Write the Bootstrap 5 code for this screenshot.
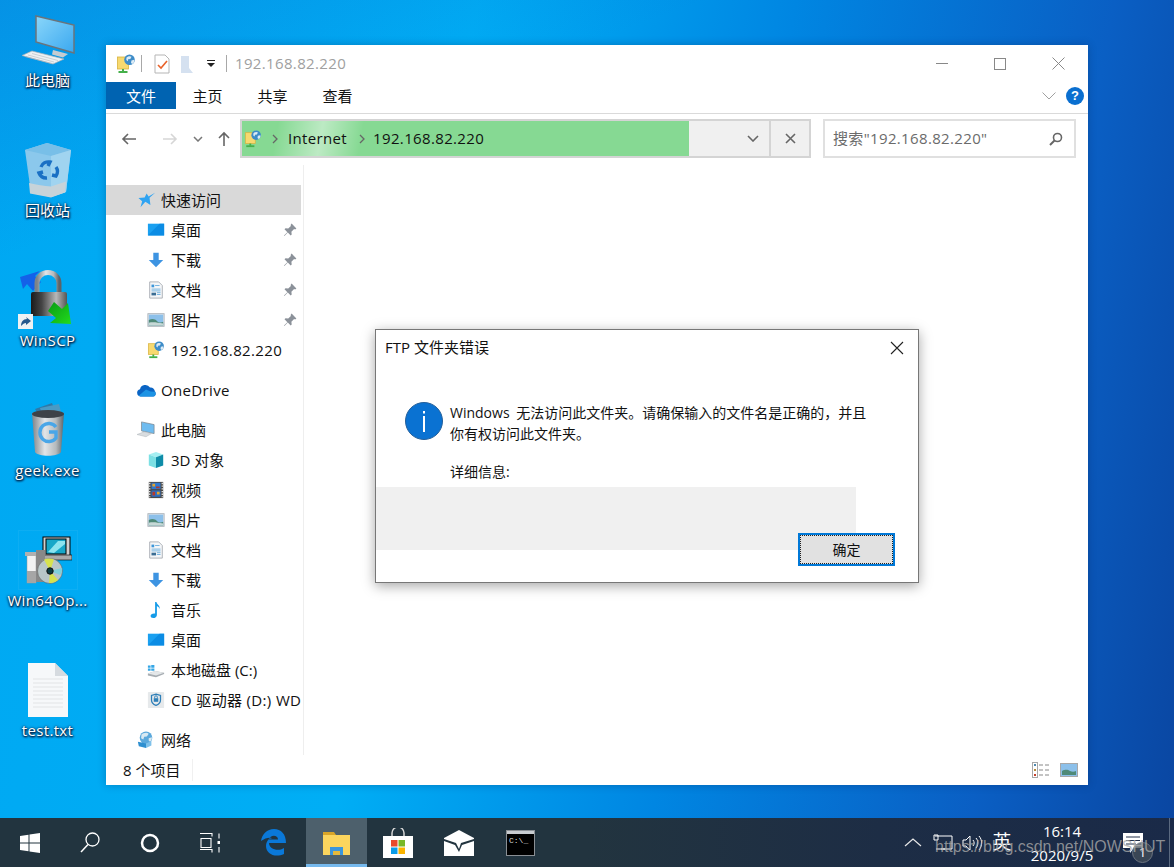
<!DOCTYPE html>
<html lang="zh-CN">
<head>
    <meta charset="UTF-8">
    <meta name="viewport" content="width=device-width, initial-scale=1">
    <title>FTP 文件夹错误</title>
    <link href="https://cdn.jsdelivr.net/npm/bootstrap@5.3.0/dist/css/bootstrap.min.css" rel="stylesheet">
    <style>
        html, body { height: 100%; margin: 0; overflow: hidden; }
        body {
          font-family: "Open Sans", "Noto Sans CJK SC", sans-serif;
          font-size: 15px;
          color: #111;
          background: #00a8f0;
        }
        .svg-defs { position: absolute; width: 0; height: 0; }
        svg { display: block; flex: none; }
        .lat { letter-spacing: .35px; }

        .desk {
          width: 1174px;
          height: 867px;
          position: relative;
          background:
            linear-gradient(160deg, rgba(16,96,200,.3) 0, rgba(16,96,200,0) 20%),
            linear-gradient(100deg, #00a8f2 0, #00aef5 36%, #0086e2 60%, #0a5fc4 84%, #0a45a0 100%);
        }
        .desk-main { height: 818px; }
        .desk-col { width: 95px; padding-top: 10px; }
        .desk-item { height: 130px; }
        .desk-pic { height: 60px; }
        .desk-frame { width: 60px; height: 60px; border: 1px solid rgba(255,255,255,.05); }
        .desk-label {
          height: 20px;
          line-height: 20px;
          color: #fff;
          text-shadow: 0 1px 2px #00264d, 1px 1px 2px #00264d, 0 0 3px #00264d;
          white-space: nowrap;
        }

        .win-frame {
          position: absolute;
          left: 106px;
          top: 45px;
          width: 982px;
          height: 740px;
          background: #fff;
          box-shadow: 0 0 8px rgba(0,30,80,.3);
        }
        .title-row { height: 37px; padding-left: 10px; }
        .title-sep { width: 1px; height: 17px; background: #a8a8a8; }
        .title-sep-a { margin-left: 5px; }
        .title-check { margin-left: 11px; }
        .title-blank { margin-left: 8px; }
        .title-drop { margin-left: 11px; }
        .title-sep-b { margin-left: 10px; }
        .title-text { color: #a0a0a0; margin-left: 8px; }
        .win-ctl { width: 58.5px; height: 37px; }
        .tab-row { height: 32px; padding-bottom: 4px; border-bottom: 1px solid #dadada; }
        .tab-file { width: 70px; background: #0063b1; color: #fff; padding-top: 2px; }
        .tab-item { width: 65px; padding: 2px 2px 0 0; }
        .tab-right { padding-right: 4px; gap: 10px; }
        .help-dot {
          width: 18px; height: 18px; border-radius: 50%;
          background: #0a6fd0; color: #fff;
          font: bold 13px/18px "Liberation Sans", sans-serif;
          text-align: center;
        }

        .nav-row { height: 51px; padding-top: 5px; padding-left: 15px; }
        .nav-btns { width: 119px; }
        .nav-btn { height: 39px; }
        .nav-fwd { margin-left: 25px; }
        .nav-more { margin-left: 15px; }
        .addr-box {
          width: 571px;
          height: 39px;
          border: 2px solid #d4d4d4;
          background: #f0f0f0;
        }
        .addr-fill {
          width: 447px;
          flex: none;
          background:
            linear-gradient(100deg, rgba(255,255,255,0) 8%, rgba(255,255,255,.45) 18%, rgba(255,255,255,0) 27%),
            #86d993;
          padding-left: 2px;
        }
        .addr-sep-a { margin-left: 10px; }
        .addr-seg-a { margin-left: 10px; }
        .addr-sep-b { margin-left: 12px; }
        .addr-seg-b { margin-left: 8px; }
        .addr-drop { width: 80px; flex: none; padding-right: 10px; }
        .addr-end { width: 40px; flex: none; border-left: 2px solid #d4d4d4; }
        .search-box {
          width: 253px;
          height: 39px;
          margin-left: 12px;
          border: 2px solid #e0e0e0;
          padding: 0 11px 0 8px;
          color: #6b6b6b;
        }

        .body-row { height: 590px; }
        .side-pane { width: 198px; padding-top: 20px; border-right: 1px solid #eee; overflow: hidden; }
        .side-list { width: 195px; }
        .side-list .side-item {
          height: 30px;
          white-space: nowrap;
          border: 0;
          background: none;
          border-radius: 0;
          color: #111;
          padding: 0 0 0 41px;
          gap: 6px;
        }
        .side-item span { padding-top: 1px; }
        .side-list .side-top { padding-left: 30px; gap: 5px; margin-top: 10px; }
        .side-list .side-sel { background: #d9d9d9; padding-left: 32px; gap: 5px; }
        .side-pin { margin-left: auto; margin-right: 4px; }

        .status-row { height: 30px; padding: 0 10px 0 17px; }
        .status-count { width: 70px; border-right: 1px solid #f0f0f0; }
        .status-views { gap: 10px; }

        .dlg-frame {
          position: absolute;
          left: 375px;
          top: 329px;
          width: 544px;
          height: 254px;
          background: #fff;
          border: 1px solid #777;
          box-shadow: 0 3px 12px rgba(0,0,0,.35);
        }
        .dlg-head { height: 34px; padding: 0 14px 0 9px; }
        .dlg-close { margin-top: 2px; }
        .dlg-body { padding: 38px 0 0 29px; gap: 7px; font-size: 14px; }
        .dlg-msg { width: 420px; line-height: 21px; word-spacing: 3px; }
        .dlg-detail { margin: 17px 0 0 74px; height: 21px; line-height: 21px; font-size: 14px; }
        .dlg-band { width: 480px; height: 63px; background: #f0f0f0; margin-top: 5px; }
        .dlg-ok {
          position: absolute;
          left: 422px;
          top: 203px;
          width: 97px;
          height: 33px;
          background: #e1e1e1;
          border: 2px solid #0078d7;
          outline: 1px dotted #222;
          outline-offset: -3px;
          border-radius: 0;
          padding: 0;
          font-size: 14px;
          color: #111;
        }

        .task-bar {
          height: 49px;
          background: linear-gradient(90deg, #22343f 0, #22343f 50%, #1d2d45 75%, #1a2a48 100%);
          color: #fff;
        }
        .task-btn { width: 61.2px; height: 49px; }
        .task-sm { width: 60px; }
        .task-edge { width: 66px; }
        .task-on { background: #4d606c; border-bottom: 3px solid #76b9ed; padding-top: 3px; }
        .tray-cell { width: 30px; }
        .tray-first { margin-left: auto; }
        .tray-ime { width: 28px; font-size: 19px; }
        .tray-clock { width: 92px; line-height: 24px; }
        .tray-note { width: 62px; position: relative; border-right: 1px solid #5b6a80; margin-right: 4px; padding-left: 15px; }
        .note-count {
          position: absolute;
          left: 24px; top: 24px;
          width: 21px; height: 21px;
          border-radius: 50%;
          background: rgba(70,80,90,.75);
          border: 1px solid #6c7480;
          font-size: 13px;
          line-height: 19px;
          text-align: center;
        }
        .mark-text {
          position: absolute;
          left: 935px;
          top: 837px;
          font-family: "Liberation Sans", sans-serif;
          font-size: 16px;
          line-height: 20px;
          color: rgba(170,170,170,.78);
          white-space: nowrap;
        }
    </style>
</head>
<body>

<svg class="svg-defs" aria-hidden="true">
    <defs>
        <linearGradient id="gScreen" x1="0" y1="0" x2="1" y2="1"><stop offset="0" stop-color="#8ad6fa"/><stop offset="1" stop-color="#3aa8f0"/></linearGradient>
        <linearGradient id="gMetal" x1="0" y1="0" x2="1" y2="0"><stop offset="0" stop-color="#7d8388"/><stop offset=".4" stop-color="#e2e5e8"/><stop offset=".75" stop-color="#b5babd"/><stop offset="1" stop-color="#5d6368"/></linearGradient>
        <linearGradient id="gLock" x1="0" y1="0" x2="1" y2="0"><stop offset="0" stop-color="#1a1a1a"/><stop offset=".3" stop-color="#444"/><stop offset=".7" stop-color="#b8b8b8"/><stop offset="1" stop-color="#555"/></linearGradient>
        <linearGradient id="gGreen" x1="0" y1="0" x2="1" y2="1"><stop offset="0" stop-color="#0a9a12"/><stop offset="1" stop-color="#22dc1e"/></linearGradient>

        <symbol id="i-net" viewBox="0 0 20 20">
            <rect x="1.5" y="3" width="11" height="12" fill="#f7d96f" stroke="#d8b23e" stroke-width=".8"/>
            <rect x="6" y="15" width="2" height="2.5" fill="#45b04a"/>
            <rect x="2.5" y="17" width="9" height="2" fill="#45b04a"/>
            <circle cx="13.5" cy="5.8" r="5.3" fill="#3d8cc8"/>
            <path d="M10.5 3.5c2-1.8 4-1.4 5-.8l-1.2 2.2-2.2.4-.2 2-1.6-1.2zM15.4 6.5l2.8-.8c.4 1.8-.4 3.4-1.8 4.2l-1.4-1z" fill="#dcebf5"/>
        </symbol>
        <symbol id="i-star" viewBox="0 0 20 20">
            <path d="M19 2 12.8 7.600 13.800 15.500 8.200 12 2.800 18 4.600 11.400 0.500 7.800 7.400 7.300 9.600 2.800 11.800 6.200z" fill="#2ea3f2"/>
        </symbol>
        <symbol id="i-screen" viewBox="0 0 20 20">
            <rect x="1" y="3" width="18" height="13" fill="#1aa0f0"/>
            <path d="M1 16 14 3h5v13z" fill="#0b8ce4"/>
        </symbol>
        <symbol id="i-down" viewBox="0 0 20 20">
            <path d="M7 2h6v8h5l-8 8-8-8h5z" fill="#3d94e2"/>
        </symbol>
        <symbol id="i-doc" viewBox="0 0 20 20">
            <path d="M3 1h10l4 4v14H3z" fill="#f4f6f8" stroke="#a8adb2"/>
            <path d="M5 4h3v3H5z" fill="#3c96d8"/>
            <path d="M9 5h5M5 9h10M5 11h10M11 13h4M11 15h4" stroke="#6aaede" stroke-width="1"/>
            <rect x="5" y="13" width="5" height="3" fill="#3a6d94"/>
        </symbol>
        <symbol id="i-pic" viewBox="0 0 20 20">
            <rect x="1" y="3" width="18" height="14" fill="#e8ecef" stroke="#a9b0b6"/>
            <rect x="2" y="4" width="16" height="12" fill="#8cc0ea"/>
            <path d="M2 10c4-2 7-1 9 1s5 2 7 1v4H2z" fill="#4f8a78"/>
            <path d="M2 13c5-1 10 0 16 1v2H2z" fill="#c6d8d6"/>
        </symbol>
        <symbol id="i-pin" viewBox="0 0 14 14">
            <path d="M8.600 .6 13.400 5.400l-1.300 1-1-.3-2.700 2.700.3 2.700-1 1L4.800 9.600 1.400 13l-.4-.4L4.400 9.200 1.500 6.300l1-1 2.700.3 2.700-2.700-.3-1z" fill="#8b9199"/>
        </symbol>
        <symbol id="i-cloud" viewBox="0 0 22 16">
            <path d="M5 14.500a4 4 0 0 1-.6-7.900 6 6 0 0 1 11-1.800 4.600 4.600 0 0 1 5.400 4.400c1.400 1 1.400 5.300-1.800 5.300z" fill="#0a64c4"/>
            <path d="M3 13.800 11 7l5 2 5 .5c1 2 .5 5-2 5H5c-1 0-1.500-.3-2-.7z" fill="#1c93e4"/>
        </symbol>
        <symbol id="i-pc" viewBox="0 0 22 20">
            <path d="M6 1l14 3v10L6 11z" fill="#6fbcf0" stroke="#7d8790" stroke-width=".8"/>
            <path d="M1 15l8-3 8 2-6 3.500z" fill="#d9dde0" stroke="#aab0b5" stroke-width=".5"/>
        </symbol>
        <symbol id="i-cube" viewBox="0 0 20 20">
            <path d="M10 1l8 3-8 3-8-3z" fill="#a5eff2"/>
            <path d="M10 7l8-3v12l-8 3z" fill="#0e8ca8"/>
            <path d="M2 4l8 3v12l-8-3z" fill="#7ce0e4"/>
        </symbol>
        <symbol id="i-film" viewBox="0 0 20 20">
            <rect x="2" y="1" width="16" height="18" fill="#4a4a4a"/>
            <path d="M3 2v16M17 2v16" stroke="#ddd" stroke-width="1.600" stroke-dasharray="1.500 1.500"/>
            <rect x="5" y="2" width="10" height="7" fill="#2f78d0"/>
            <rect x="5" y="10.500" width="10" height="7" fill="#2a6fc6"/>
            <path d="M6 3h3v3H6zM11 12h3v3h-3z" fill="#e8a52c"/>
            <path d="M10 6h4v2h-4zM6 12h3v4H6z" fill="#b43a2c"/>
        </symbol>
        <symbol id="i-note" viewBox="0 0 20 20">
            <path d="M9 1h1.500c.5 3 4.500 4 3.500 8-.6-2-2-3-3-3.400V15.500c0 2-2 3.500-4 3.500S4 18 4 16.500 6 13.500 9 14z" fill="#159be8"/>
        </symbol>
        <symbol id="i-drive" viewBox="0 0 20 20">
            <path d="M1 14l8-3 10 2v1.500L10 18l-9-2z" fill="#a7adb2"/>
            <path d="M1 14l8-3 10 2-9 3z" fill="#e4e7e9"/>
            <path d="M1 5h3v2.500H1zM4.700 4.500h3.500v3H4.700zM1 8.200h3v2.500H1zM4.700 8.200h3.500v2.500H4.700z" fill="#34a6e6"/>
        </symbol>
        <symbol id="i-cd" viewBox="0 0 20 20">
            <rect x="1" y="1" width="18" height="18" rx="1" fill="#e6e9eb"/>
            <path d="M10 3.500l5 1.500v5c0 3-2.500 5-5 6-2.500-1-5-3-5-6V5z" fill="none" stroke="#2e7fb8" stroke-width="1.400"/>
            <rect x="7.500" y="8" width="5" height="4" fill="#2e7fb8"/>
            <path d="M8.500 8V6.800a1.500 1.500 0 0 1 3 0V8" fill="none" stroke="#2e7fb8"/>
        </symbol>
        <symbol id="i-globe" viewBox="0 0 22 20">
            <circle cx="11" cy="7.500" r="7" fill="#5aa8dc"/>
            <path d="M6 4c2-2 6-3 8-1l-2 3-3 .5-1 3-2.500-1.500zM14 8l3.500-1c.3 2-.7 4-2 5l-1.500-1.500z" fill="#d8e9f2"/>
            <path d="M2 12l9 2v5l-8-2z" fill="#2e8fd0"/>
            <path d="M11 14l6-3v5l-6 3z" fill="#7fc1ea"/>
        </symbol>

        <symbol id="d-pc" viewBox="0 0 56 50">
            <path d="M16 1 54 10V38L16 27z" fill="url(#gScreen)" stroke="#6a747c" stroke-width="1.500"/>
            <path d="M33 35l15 4-5 3.500-11-3z" fill="#c6ccd1"/>
            <path d="M2 40.500 12 36 44 44 33 49z" fill="#eef1f3" stroke="#a8afb5" stroke-width=".7"/>
            <path d="M8 40l26 7M12 38.500l26 7M5 41.500l27 7" stroke="#b5bbc0" stroke-width=".6"/>
        </symbol>
        <symbol id="d-bin" viewBox="0 0 50 56">
            <path d="M2 8 24 1l24 7-5 42-15 5-20-4z" fill="#8bc8ec"/>
            <path d="M2 8 24 1l24 7-20 6z" fill="#78bfe8"/>
            <path d="M28 14l20-6-5 42-15 5z" fill="#a0d4f0"/>
            <path d="M6 41c8 2 15 3 22 3.500l15-5-1 11-14 5-21-4z" fill="#c7d3d9"/>
            <path d="M18 25a8 8 0 0 1 9-5l-2 4M33 25a8 8 0 0 1 0 9l-4-1M24 36a8 8 0 0 1-8-5l4-1" fill="none" stroke="#1a70c4" stroke-width="3.400"/>
        </symbol>
        <symbol id="d-scp" viewBox="0 0 60 60">
            <path d="M2 7 22 1l-5 5 6 6-8 9-6-7-4 5z" fill="#1461e8"/>
            <path d="M19 24V13a10.500 10 0 0 1 22 0v11" fill="none" stroke="url(#gMetal)" stroke-width="5"/>
            <rect x="13" y="22" width="36" height="24" rx="2" fill="url(#gLock)"/>
            <path d="M36 32l8 7 6-6 3 21-21-1 6-5-8-7z" fill="url(#gGreen)"/>
            <rect x="0" y="44" width="15" height="15" fill="#eef1f3"/>
            <path d="M3 56c0-4 2-7 6-7l-1-2 5 4-5 4v-2c-2 0-3 1-5 3z" fill="#26588c"/>
        </symbol>
        <symbol id="d-geek" viewBox="0 0 34 56">
            <path d="M4 7l17-6 3 8-17 3z" fill="#2f79a8"/>
            <path d="M9 6l19-4 2 8-19 2z" fill="#4a9ac4"/>
            <path d="M1 11c4-2 28-2 32 0l-3 39c-3 5-23 5-26 0z" fill="url(#gMetal)"/>
            <ellipse cx="17" cy="12" rx="16" ry="4" fill="#3d4248"/>
            <path d="M25 25a9 9 0 1 0 0 11v-6h-7" fill="none" stroke="#49a6e8" stroke-width="3.400"/>
        </symbol>
        <symbol id="d-setup" viewBox="0 0 48 48">
            <rect x="19" y="1" width="27" height="22" fill="#d0d0d0" stroke="#000"/>
            <rect x="22" y="3" width="20" height="15" fill="#17a7c8" stroke="#000"/>
            <path d="M24 16 34 5h7v3L30 17z" fill="#8ce4ef"/>
            <rect x="17" y="19" width="31" height="5" fill="#aaa" stroke="#000" stroke-width=".6"/>
            <rect x="3" y="19" width="9" height="28" fill="#f2f2f2" stroke="#999" stroke-width=".5"/>
            <rect x="3" y="35" width="9" height="12" fill="#a6a6a6"/>
            <rect x="1" y="16" width="13" height="4" fill="#b0b0b0"/>
            <rect x="12" y="14" width="9" height="32" fill="#888"/>
            <circle cx="26" cy="35" r="12.500" fill="#b8c6c8" stroke="#555" stroke-width=".5"/>
            <path d="M26 35 20 23.500c3-1.200 7-1.500 10 0zM26 35l8 9c-3 2.500-6 3-9 3z" fill="#d6e24f"/>
            <path d="M26 35l12-3c.3 3-.5 5-2 7z" fill="#7fd0dc"/>
            <circle cx="26" cy="35" r="3.200" fill="#0d3d44" stroke="#111"/>
        </symbol>
        <symbol id="d-txt" viewBox="0 0 42 54">
            <path d="M1 0h27l13 13v41H1z" fill="#f6f8fa"/>
            <path d="M28 0l13 13H28z" fill="#d6dbe0"/>
            <path d="M6 16h30M6 20h30M6 24h30M6 28h30M6 32h30M6 36h30M6 40h30M6 44h30" stroke="#e2e4e6" stroke-width="1"/>
        </symbol>
    </defs>
</svg>

<div class="desk d-flex flex-column">
    <!-- desktop icons -->
    <div class="desk-main">
        <div class="desk-col d-flex flex-column">
            <div class="desk-item d-flex flex-column align-items-center">
                <div class="desk-pic d-flex align-items-center justify-content-center"><svg width="56" height="50"><use href="#d-pc"/></svg></div>
                <div class="desk-label">此电脑</div>
            </div>
            <div class="desk-item d-flex flex-column align-items-center">
                <div class="desk-pic d-flex align-items-center justify-content-center"><svg width="50" height="56"><use href="#d-bin"/></svg></div>
                <div class="desk-label">回收站</div>
            </div>
            <div class="desk-item d-flex flex-column align-items-center">
                <div class="desk-pic d-flex align-items-center justify-content-center"><svg width="60" height="60"><use href="#d-scp"/></svg></div>
                <div class="desk-label lat">WinSCP</div>
            </div>
            <div class="desk-item d-flex flex-column align-items-center">
                <div class="desk-pic d-flex align-items-center justify-content-center"><svg width="34" height="56"><use href="#d-geek"/></svg></div>
                <div class="desk-label lat">geek.exe</div>
            </div>
            <div class="desk-item d-flex flex-column align-items-center">
                <div class="desk-pic d-flex align-items-center justify-content-center"><div class="desk-frame d-flex align-items-center justify-content-center"><svg width="48" height="48"><use href="#d-setup"/></svg></div></div>
                <div class="desk-label lat">Win64Op...</div>
            </div>
            <div class="desk-item d-flex flex-column align-items-center">
                <div class="desk-pic d-flex align-items-center justify-content-center"><svg width="42" height="54"><use href="#d-txt"/></svg></div>
                <div class="desk-label lat">test.txt</div>
            </div>
        </div>
    </div>

    <!-- explorer window -->
    <div class="win-frame d-flex flex-column">
        <div class="title-row d-flex align-items-center">
            <svg width="20" height="20"><use href="#i-net"/></svg>
            <div class="title-sep title-sep-a"></div>
            <svg class="title-check" width="18" height="20" viewBox="0 0 18 20"><path d="M2 1h10l4 4v14H2z" fill="#fff" stroke="#b5b5b5"/><path d="M5 11l3 3 6-7" fill="none" stroke="#e8622a" stroke-width="1.600"/></svg>
            <svg class="title-blank" width="16" height="20" viewBox="0 0 16 20"><path d="M2 2h8v12l4 5H2z" fill="#d5e1f0"/></svg>
            <svg class="title-drop" width="10" height="8" viewBox="0 0 10 8"><path d="M1 0h8v1H1zM1 3h8L5 7z" fill="#222"/></svg>
            <div class="title-sep title-sep-b"></div>
            <span class="title-text lat">192.168.82.220</span>
            <div class="ms-auto d-flex">
                <div class="win-ctl d-flex align-items-center justify-content-center"><svg width="12" height="2"><path d="M0 .5h12" stroke="#888"/></svg></div>
                <div class="win-ctl d-flex align-items-center justify-content-center"><svg width="12" height="12"><rect x=".5" y=".5" width="11" height="11" fill="none" stroke="#888"/></svg></div>
                <div class="win-ctl d-flex align-items-center justify-content-center"><svg width="13" height="13"><path d="M.5.500l12 12M12.500.500l-12 12" stroke="#888"/></svg></div>
            </div>
        </div>

        <div class="tab-row d-flex">
            <div class="tab-file d-flex align-items-center justify-content-center">文件</div>
            <div class="tab-item d-flex align-items-center justify-content-center">主页</div>
            <div class="tab-item d-flex align-items-center justify-content-center">共享</div>
            <div class="tab-item d-flex align-items-center justify-content-center">查看</div>
            <div class="tab-right ms-auto d-flex align-items-center">
                <svg width="14" height="8"><path d="M.5.500 7 7 13.500.500" fill="none" stroke="#a0a0a0"/></svg>
                <div class="help-dot">?</div>
            </div>
        </div>

        <div class="nav-row d-flex align-items-start">
            <div class="nav-btns nav-btn d-flex align-items-center">
                <svg width="16" height="12" viewBox="0 0 16 12"><path d="M15 6H2M7 1 2 6l5 5" fill="none" stroke="#666" stroke-width="1.600"/></svg>
                <svg class="nav-fwd" width="16" height="12" viewBox="0 0 16 12"><path d="M1 6h13M9 1l5 5-5 5" fill="none" stroke="#d6d6d6" stroke-width="1.600"/></svg>
                <svg class="nav-more" width="10" height="6" viewBox="0 0 10 6"><path d="M1 1l4 4 4-4" fill="none" stroke="#777" stroke-width="1.500"/></svg>
                <svg class="nav-more" width="12" height="16" viewBox="0 0 12 16"><path d="M6 15V2M1 7l5-5 5 5" fill="none" stroke="#666" stroke-width="1.600"/></svg>
            </div>
            <div class="addr-box d-flex">
                <div class="addr-fill d-flex align-items-center">
                    <svg width="18" height="18"><use href="#i-net"/></svg>
                    <svg class="addr-sep-a" width="6" height="10" viewBox="0 0 6 10"><path d="M1 1l4 4-4 4" fill="none" stroke="#666" stroke-width="1.300"/></svg>
                    <span class="addr-seg-a lat">Internet</span>
                    <svg class="addr-sep-b" width="6" height="10" viewBox="0 0 6 10"><path d="M1 1l4 4-4 4" fill="none" stroke="#666" stroke-width="1.300"/></svg>
                    <span class="addr-seg-b lat">192.168.82.220</span>
                </div>
                <div class="addr-drop d-flex align-items-center justify-content-end">
                    <svg width="12" height="7" viewBox="0 0 12 7"><path d="M1 1l5 5 5-5" fill="none" stroke="#666" stroke-width="1.600"/></svg>
                </div>
                <div class="addr-end d-flex align-items-center justify-content-center">
                    <svg width="11" height="11" viewBox="0 0 11 11"><path d="M1 1l9 9M10 1l-9 9" stroke="#666" stroke-width="1.600"/></svg>
                </div>
            </div>
            <div class="search-box d-flex align-items-center justify-content-between">
                <span class="lat">搜索"192.168.82.220"</span>
                <svg width="14" height="14" viewBox="0 0 14 14"><circle cx="8.500" cy="5.500" r="4" fill="none" stroke="#666" stroke-width="1.600"/><path d="M5.500 8.500 1 13" stroke="#666" stroke-width="2"/></svg>
            </div>
        </div>

        <div class="body-row d-flex">
            <div class="side-pane">
                <div class="list-group side-list">
                    <div class="list-group-item side-item side-sel d-flex align-items-center"><svg width="18" height="18"><use href="#i-star"/></svg><span>快速访问</span></div>
                    <div class="list-group-item side-item d-flex align-items-center"><svg width="18" height="18"><use href="#i-screen"/></svg><span>桌面</span><svg class="side-pin" width="14" height="14"><use href="#i-pin"/></svg></div>
                    <div class="list-group-item side-item d-flex align-items-center"><svg width="18" height="18"><use href="#i-down"/></svg><span>下载</span><svg class="side-pin" width="14" height="14"><use href="#i-pin"/></svg></div>
                    <div class="list-group-item side-item d-flex align-items-center"><svg width="18" height="18"><use href="#i-doc"/></svg><span>文档</span><svg class="side-pin" width="14" height="14"><use href="#i-pin"/></svg></div>
                    <div class="list-group-item side-item d-flex align-items-center"><svg width="18" height="18"><use href="#i-pic"/></svg><span>图片</span><svg class="side-pin" width="14" height="14"><use href="#i-pin"/></svg></div>
                    <div class="list-group-item side-item d-flex align-items-center"><svg width="18" height="18"><use href="#i-net"/></svg><span class="lat">192.168.82.220</span></div>
                    <div class="list-group-item side-item side-top d-flex align-items-center"><svg width="20" height="15"><use href="#i-cloud"/></svg><span class="lat">OneDrive</span></div>
                    <div class="list-group-item side-item side-top d-flex align-items-center"><svg width="20" height="18"><use href="#i-pc"/></svg><span>此电脑</span></div>
                    <div class="list-group-item side-item d-flex align-items-center"><svg width="18" height="18"><use href="#i-cube"/></svg><span>3D 对象</span></div>
                    <div class="list-group-item side-item d-flex align-items-center"><svg width="18" height="18"><use href="#i-film"/></svg><span>视频</span></div>
                    <div class="list-group-item side-item d-flex align-items-center"><svg width="18" height="18"><use href="#i-pic"/></svg><span>图片</span></div>
                    <div class="list-group-item side-item d-flex align-items-center"><svg width="18" height="18"><use href="#i-doc"/></svg><span>文档</span></div>
                    <div class="list-group-item side-item d-flex align-items-center"><svg width="18" height="18"><use href="#i-down"/></svg><span>下载</span></div>
                    <div class="list-group-item side-item d-flex align-items-center"><svg width="18" height="18"><use href="#i-note"/></svg><span>音乐</span></div>
                    <div class="list-group-item side-item d-flex align-items-center"><svg width="18" height="18"><use href="#i-screen"/></svg><span>桌面</span></div>
                    <div class="list-group-item side-item d-flex align-items-center"><svg width="18" height="18"><use href="#i-drive"/></svg><span>本地磁盘 (C:)</span></div>
                    <div class="list-group-item side-item d-flex align-items-center"><svg width="18" height="18"><use href="#i-cd"/></svg><span class="lat">CD 驱动器 (D:) WD</span></div>
                    <div class="list-group-item side-item side-top d-flex align-items-center"><svg width="20" height="18"><use href="#i-globe"/></svg><span>网络</span></div>
                </div>
            </div>
        </div>

        <div class="status-row d-flex align-items-center">
            <div class="status-count">8 个项目</div>
            <div class="ms-auto status-views d-flex align-items-center">
                <svg width="18" height="16" viewBox="0 0 18 16"><rect x=".5" y=".5" width="5" height="15" fill="#fff" stroke="#a8a8a8"/><path d="M2 2h2v2H2z" fill="#4f8ab0"/><path d="M2 7h2v2H2z" fill="#b58a3c"/><path d="M2 12h2v2H2z" fill="#c4402c"/><path d="M7 3h4M13 3h4M7 8h4M13 8h4M7 13h4M13 13h4" stroke="#888"/></svg>
                <svg width="18" height="14" viewBox="0 0 18 14"><rect x=".5" y=".5" width="17" height="13" fill="#8cc0ea" stroke="#a8a8a8"/><path d="M2 8c4-2 6-1 8 0s4 1 6 0v4H2z" fill="#4f8a78"/></svg>
            </div>
        </div>
    </div>

    <!-- error dialog -->
    <div class="dlg-frame" role="dialog">
        <div class="dlg-head d-flex align-items-center justify-content-between">
            <span>FTP 文件夹错误</span>
            <svg class="dlg-close" width="14" height="14"><path d="M1 1l12 12M13 1 1 13" stroke="#222" stroke-width="1.100"/></svg>
        </div>
        <div class="dlg-body d-flex">
            <svg width="38" height="38" viewBox="0 0 38 38"><circle cx="19" cy="19" r="18.500" fill="#0a72d2" stroke="#235f9a"/><rect x="18" y="9" width="2" height="2.500" fill="#fff"/><rect x="18" y="14" width="2" height="16" fill="#fff"/></svg>
            <div class="dlg-msg">Windows 无法访问此文件夹。请确保输入的文件名是正确的，并且你有权访问此文件夹。</div>
        </div>
        <div class="dlg-detail">详细信息:</div>
        <div class="dlg-band"></div>
        <button type="button" class="btn dlg-ok">确定</button>
    </div>

    <!-- taskbar -->
    <div class="task-bar d-flex align-items-center">
        <div class="task-btn task-sm d-flex align-items-center justify-content-center">
            <svg width="20" height="20" viewBox="0 0 20 20"><path d="M0 3l8.500-1.200v7.700H0zM9.500 1.600 20 0v9.500H9.500zM0 10.500h8.500v7.700L0 17zM9.500 10.500H20V20L9.500 18.400z" fill="#fff"/></svg>
        </div>
        <div class="task-btn task-sm d-flex align-items-center justify-content-center">
            <svg width="20" height="21" viewBox="0 0 20 21"><circle cx="12.500" cy="7.500" r="6.500" fill="none" stroke="#fff" stroke-width="1.300"/><path d="M8 12.500 1 20" stroke="#fff" stroke-width="1.500"/></svg>
        </div>
        <div class="task-btn task-sm d-flex align-items-center justify-content-center">
            <svg width="20" height="20" viewBox="0 0 20 20"><circle cx="10" cy="10" r="8" fill="none" stroke="#fff" stroke-width="2.500"/></svg>
        </div>
        <div class="task-btn task-sm d-flex align-items-center justify-content-center">
            <svg width="20" height="20" viewBox="0 0 20 20"><path d="M0 .5h12v3M0 16.500h12v3M1 5.500h10v9H1zM19 .5v5M19 14v5.500" fill="none" stroke="#fff" stroke-width="1.100"/><rect x="17.500" y="8" width="3" height="3" fill="#fff"/></svg>
        </div>
        <div class="task-btn task-edge d-flex align-items-center justify-content-center">
            <svg width="25" height="27" viewBox="0 0 25 27"><path d="M0 12C1 5 6 0 13 0c7 0 12 5 12 14H8c0 6 9 9 15 5v6c-9 4-18 0-18-8 0-3 1-5 3-7 1 0 3-1 3-1-3-1-7 0-11 3zM8 10.500h9c0-5-8-5-9 0z" fill="#0a78d8"/></svg>
        </div>
        <div class="task-btn task-on d-flex align-items-center justify-content-center">
            <svg width="27" height="24" viewBox="0 0 27 24"><path d="M0 1h11l2 3h14v4H0z" fill="#d9a528"/><rect y="4" width="27" height="20" fill="#fbd55e"/><path d="M7 24v-8h13v8h-3v-4h-7v4z" fill="#3b96dc"/><rect x="10" y="20" width="7" height="4" fill="#e6b93c"/></svg>
        </div>
        <div class="task-btn d-flex align-items-center justify-content-center">
            <svg width="30" height="30" viewBox="0 0 30 30"><path d="M9 8V5a6 6 0 0 1 12 0v3" fill="none" stroke="#d6d6d6" stroke-width="1.500"/><rect y="8" width="30" height="22" fill="#fff"/><rect x="8" y="12" width="6.500" height="6.500" fill="#e8492c"/><rect x="15.500" y="12" width="6.500" height="6.500" fill="#78b828"/><rect x="8" y="19.500" width="6.500" height="6.500" fill="#0a9ce8"/><rect x="15.500" y="19.500" width="6.500" height="6.500" fill="#fbb400"/></svg>
        </div>
        <div class="task-btn d-flex align-items-center justify-content-center">
            <svg width="30" height="26" viewBox="0 0 30 26"><path d="M0 8 15 0l15 8v1l-13 4-2 6-3-6-12-4z" fill="#fff"/><path d="M0 11l11 4 4 7 3-7 12-4v15H0z" fill="#fff"/></svg>
        </div>
        <div class="task-btn d-flex align-items-center justify-content-center">
            <svg width="29" height="26" viewBox="0 0 29 26"><rect x=".5" y=".5" width="28" height="25" fill="#000" stroke="#8a8f94"/><rect x="1" y="1" width="27" height="3" fill="#c8ccd0"/><text x="3" y="13" font-family="Liberation Mono, monospace" font-size="8" fill="#ddd">C:\_</text></svg>
        </div>

        <div class="tray-cell tray-first d-flex justify-content-center"><svg width="18" height="9" viewBox="0 0 18 9"><path d="M1 8l8-7 8 7" fill="none" stroke="#e8e8e8" stroke-width="1.200"/></svg></div>
        <div class="tray-cell d-flex justify-content-center"><svg width="20" height="18" viewBox="0 0 20 18"><path d="M2 2h17v13H3M1 1h4v5H1zM8 15h4" fill="none" stroke="#fff"/></svg></div>
        <div class="tray-cell d-flex justify-content-center"><svg width="22" height="16" viewBox="0 0 22 16"><path d="M1 5h3l4-4v14l-4-4H1zM11 5c1.500 2 1.500 4 0 6M14 3c2.500 3 2.500 7 0 10M17 1c3.500 4 3.500 10 0 14" fill="none" stroke="#fff"/></svg></div>
        <div class="tray-ime text-center">英</div>
        <div class="tray-clock text-center"><div>16:14</div><div>2020/9/5</div></div>
        <div class="tray-note d-flex align-self-stretch align-items-center">
            <svg width="20" height="20" viewBox="0 0 20 20"><path d="M0 0h20v15h-9l-4 5v-5H0z" fill="#fff"/><path d="M3 4h14M3 7.500h14M3 11h10" stroke="#22304a"/></svg>
            <div class="note-count">1</div>
        </div>
    </div>

    <div class="mark-text">https://blog.csdn.net/NOWSHUT</div>
</div>

<script src="https://cdn.jsdelivr.net/npm/bootstrap@5.3.0/dist/js/bootstrap.bundle.min.js"></script>
</body>
</html>
